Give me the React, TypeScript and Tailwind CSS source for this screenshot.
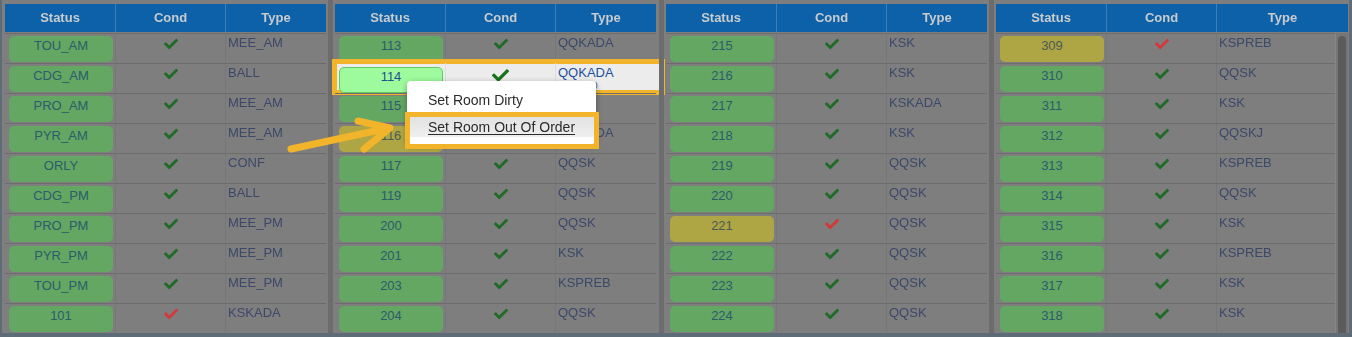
import React from "react";
import { FaCheck } from "react-icons/fa";

type Row = { s: string; t: string; red?: boolean; yellow?: boolean; hl?: boolean; sub?: string };

const panels: Row[][] = [
  [
    { s: "TOU_AM", t: "MEE_AM" },
    { s: "CDG_AM", t: "BALL" },
    { s: "PRO_AM", t: "MEE_AM" },
    { s: "PYR_AM", t: "MEE_AM" },
    { s: "ORLY", t: "CONF" },
    { s: "CDG_PM", t: "BALL" },
    { s: "PRO_PM", t: "MEE_PM" },
    { s: "PYR_PM", t: "MEE_PM" },
    { s: "TOU_PM", t: "MEE_PM" },
    { s: "101", t: "KSKADA", red: true },
  ],
  [
    { s: "113", t: "QQKADA" },
    { s: "114", t: "QQKADA", hl: true, sub: "(QQKADA)" },
    { s: "115", t: "QQSK" },
    { s: "116", t: "QQKADA", yellow: true },
    { s: "117", t: "QQSK" },
    { s: "119", t: "QQSK" },
    { s: "200", t: "QQSK" },
    { s: "201", t: "KSK" },
    { s: "203", t: "KSPREB" },
    { s: "204", t: "QQSK" },
  ],
  [
    { s: "215", t: "KSK" },
    { s: "216", t: "KSK" },
    { s: "217", t: "KSKADA" },
    { s: "218", t: "KSK" },
    { s: "219", t: "QQSK" },
    { s: "220", t: "QQSK" },
    { s: "221", t: "QQSK", yellow: true, red: true },
    { s: "222", t: "QQSK" },
    { s: "223", t: "QQSK" },
    { s: "224", t: "QQSK" },
  ],
  [
    { s: "309", t: "KSPREB", yellow: true, red: true },
    { s: "310", t: "QQSK" },
    { s: "311", t: "KSK" },
    { s: "312", t: "QQSKJ" },
    { s: "313", t: "KSPREB" },
    { s: "314", t: "QQSK" },
    { s: "315", t: "KSK" },
    { s: "316", t: "KSPREB" },
    { s: "317", t: "KSK" },
    { s: "318", t: "KSK" },
  ],
];

function Header() {
  return (
    <div className="flex h-[28px] bg-[#0c61a9] text-[13px] font-bold text-[#c9cbcd] blur-[0.5px]">
      <div className="flex w-[110px] items-center justify-center">Status</div>
      <div className="flex w-[110px] items-center justify-center border-l border-[#3f7db5]">Cond</div>
      <div className="flex flex-1 items-center justify-center border-l border-[#3f7db5]">Type</div>
    </div>
  );
}

function NormalRow({ r }: { r: Row }) {
  return (
    <div className="flex h-[30px] border-t border-[#6d6d6d] blur-[0.5px]">
      <div className="w-[110px] pl-[4px] pr-[2px] pt-[2px]">
        <div
          className={
            r.yellow
              ? "h-[26px] rounded-[5px] bg-[#aea545] pt-[2px] text-center text-[13px] leading-[15px] text-[#4c5a52]"
              : "h-[26px] rounded-[5px] bg-[#63a763] pt-[2px] text-center text-[13px] leading-[15px] text-[#2d5c6a]"
          }
        >
          {r.s}
        </div>
      </div>
      <div className="flex w-[110px] justify-center border-l border-[#777777] pt-[3px]">
        <FaCheck size={14} color={r.red ? "#d53838" : "#1f6b27"} />
      </div>
      <div className="flex-1 border-l border-[#777777] pl-[2px] pt-px text-[13px] leading-[15px] text-[#3b4868]">
        {r.t}
      </div>
    </div>
  );
}

function HighlightRow({ r }: { r: Row }) {
  return (
    <div className="relative flex h-[30px]">
      <div className="absolute left-[-3px] right-[-9px] top-[-4px] bottom-[-2px] border-[5px] border-[#f1b42a] bg-[#ececec]" />
      <div className="relative w-[110px] pl-[4px] pr-[2px] pt-[4px]">
        <div className="h-[26px] rounded-[5px] border border-[#63c963] bg-[#9dfb9d] pt-[1px] text-center text-[13px] leading-[15px] text-[#1f4f8c]">
          {r.s}
        </div>
      </div>
      <div className="relative flex w-[110px] justify-center border-l border-[#dedede] pt-[4px]">
        <FaCheck size={17} color="#16731b" />
      </div>
      <div className="relative flex-1 border-l border-[#dedede] pl-[2px] pt-[2px] text-[#1b4f9c]">
        <div className="text-[13px] leading-[15px]">{r.t}</div>
        <div className="text-[8px] leading-[9px]">{r.sub}</div>
      </div>
    </div>
  );
}

function Panel({ rows, w, scroll }: { rows: Row[]; w: string; scroll?: boolean }) {
  return (
    <div className={`flex flex-col pt-[4px] ${w}`}>
      <Header />
      <div className="h-px" />
      <div className="flex flex-1">
        <div className="flex flex-1 flex-col">
          {rows.map((r) => (r.hl ? <HighlightRow key={r.s} r={r} /> : <NormalRow key={r.s} r={r} />))}
        </div>
        {scroll && (
          <div className="flex w-[13px] justify-center border-l border-[#868686] bg-[#767676] pt-[3px] blur-[0.4px]">
            <div className="w-[8px] rounded-t-full bg-[#5b5b5b]" />
          </div>
        )}
      </div>
    </div>
  );
}

function Sep({ w }: { w: string }) {
  return (
    <div className={`flex justify-center self-stretch ${w}`}>
      <div className="w-[5px] bg-[#6c6c6c] blur-[0.4px]" />
    </div>
  );
}

export default function App() {
  return (
    <div className="relative h-[337px] w-[1352px] overflow-hidden bg-[#5e6c78] font-['Liberation_Sans',Arial,sans-serif]">
      <div className="ml-[2px] mr-[3px] flex h-[333px] bg-[#7e7e7e] pl-[3px] pr-[1px]">
        <Panel rows={panels[0]} w="w-[321px]" />
        <Sep w="w-[9px]" />
        <Panel rows={panels[1]} w="w-[321px]" />
        <Sep w="w-[10px]" />
        <Panel rows={panels[2]} w="w-[321px]" />
        <Sep w="w-[9px]" />
        <Panel rows={panels[3]} w="w-[352px]" scroll />
      </div>

      {/* context menu */}
      <div className="absolute left-[407px] top-[81px] w-[189px] rounded-[4px] bg-white pt-[9px] pb-[7px] text-[14px] leading-[20px] text-[#2b2b2b] shadow-[0_2px_6px_rgba(0,0,0,0.35)]">
        <div className="h-[20px] pl-[21px]">Set Room Dirty</div>
        <div className="mt-[7px] h-[20px] bg-gradient-to-b from-[#e2e2e2] to-[#efefef] pl-[21px] underline decoration-1 underline-offset-2">
          Set Room Out Of Order
        </div>
        <div className="pointer-events-none absolute left-[-2px] top-[31px] h-[37px] w-[194px] border-[5px] border-[#f1b42a]" />
      </div>

      {/* arrow */}
      <svg className="pointer-events-none absolute inset-0" width={1352} height={337} viewBox="0 0 1352 337">
        <g fill="none" stroke="#f1b42a" strokeWidth={7} strokeLinecap="round" strokeLinejoin="round">
          <path d="M291 149 L389 128" />
          <path d="M358 121 L390 128 L364 149" />
        </g>
      </svg>
    </div>
  );
}
